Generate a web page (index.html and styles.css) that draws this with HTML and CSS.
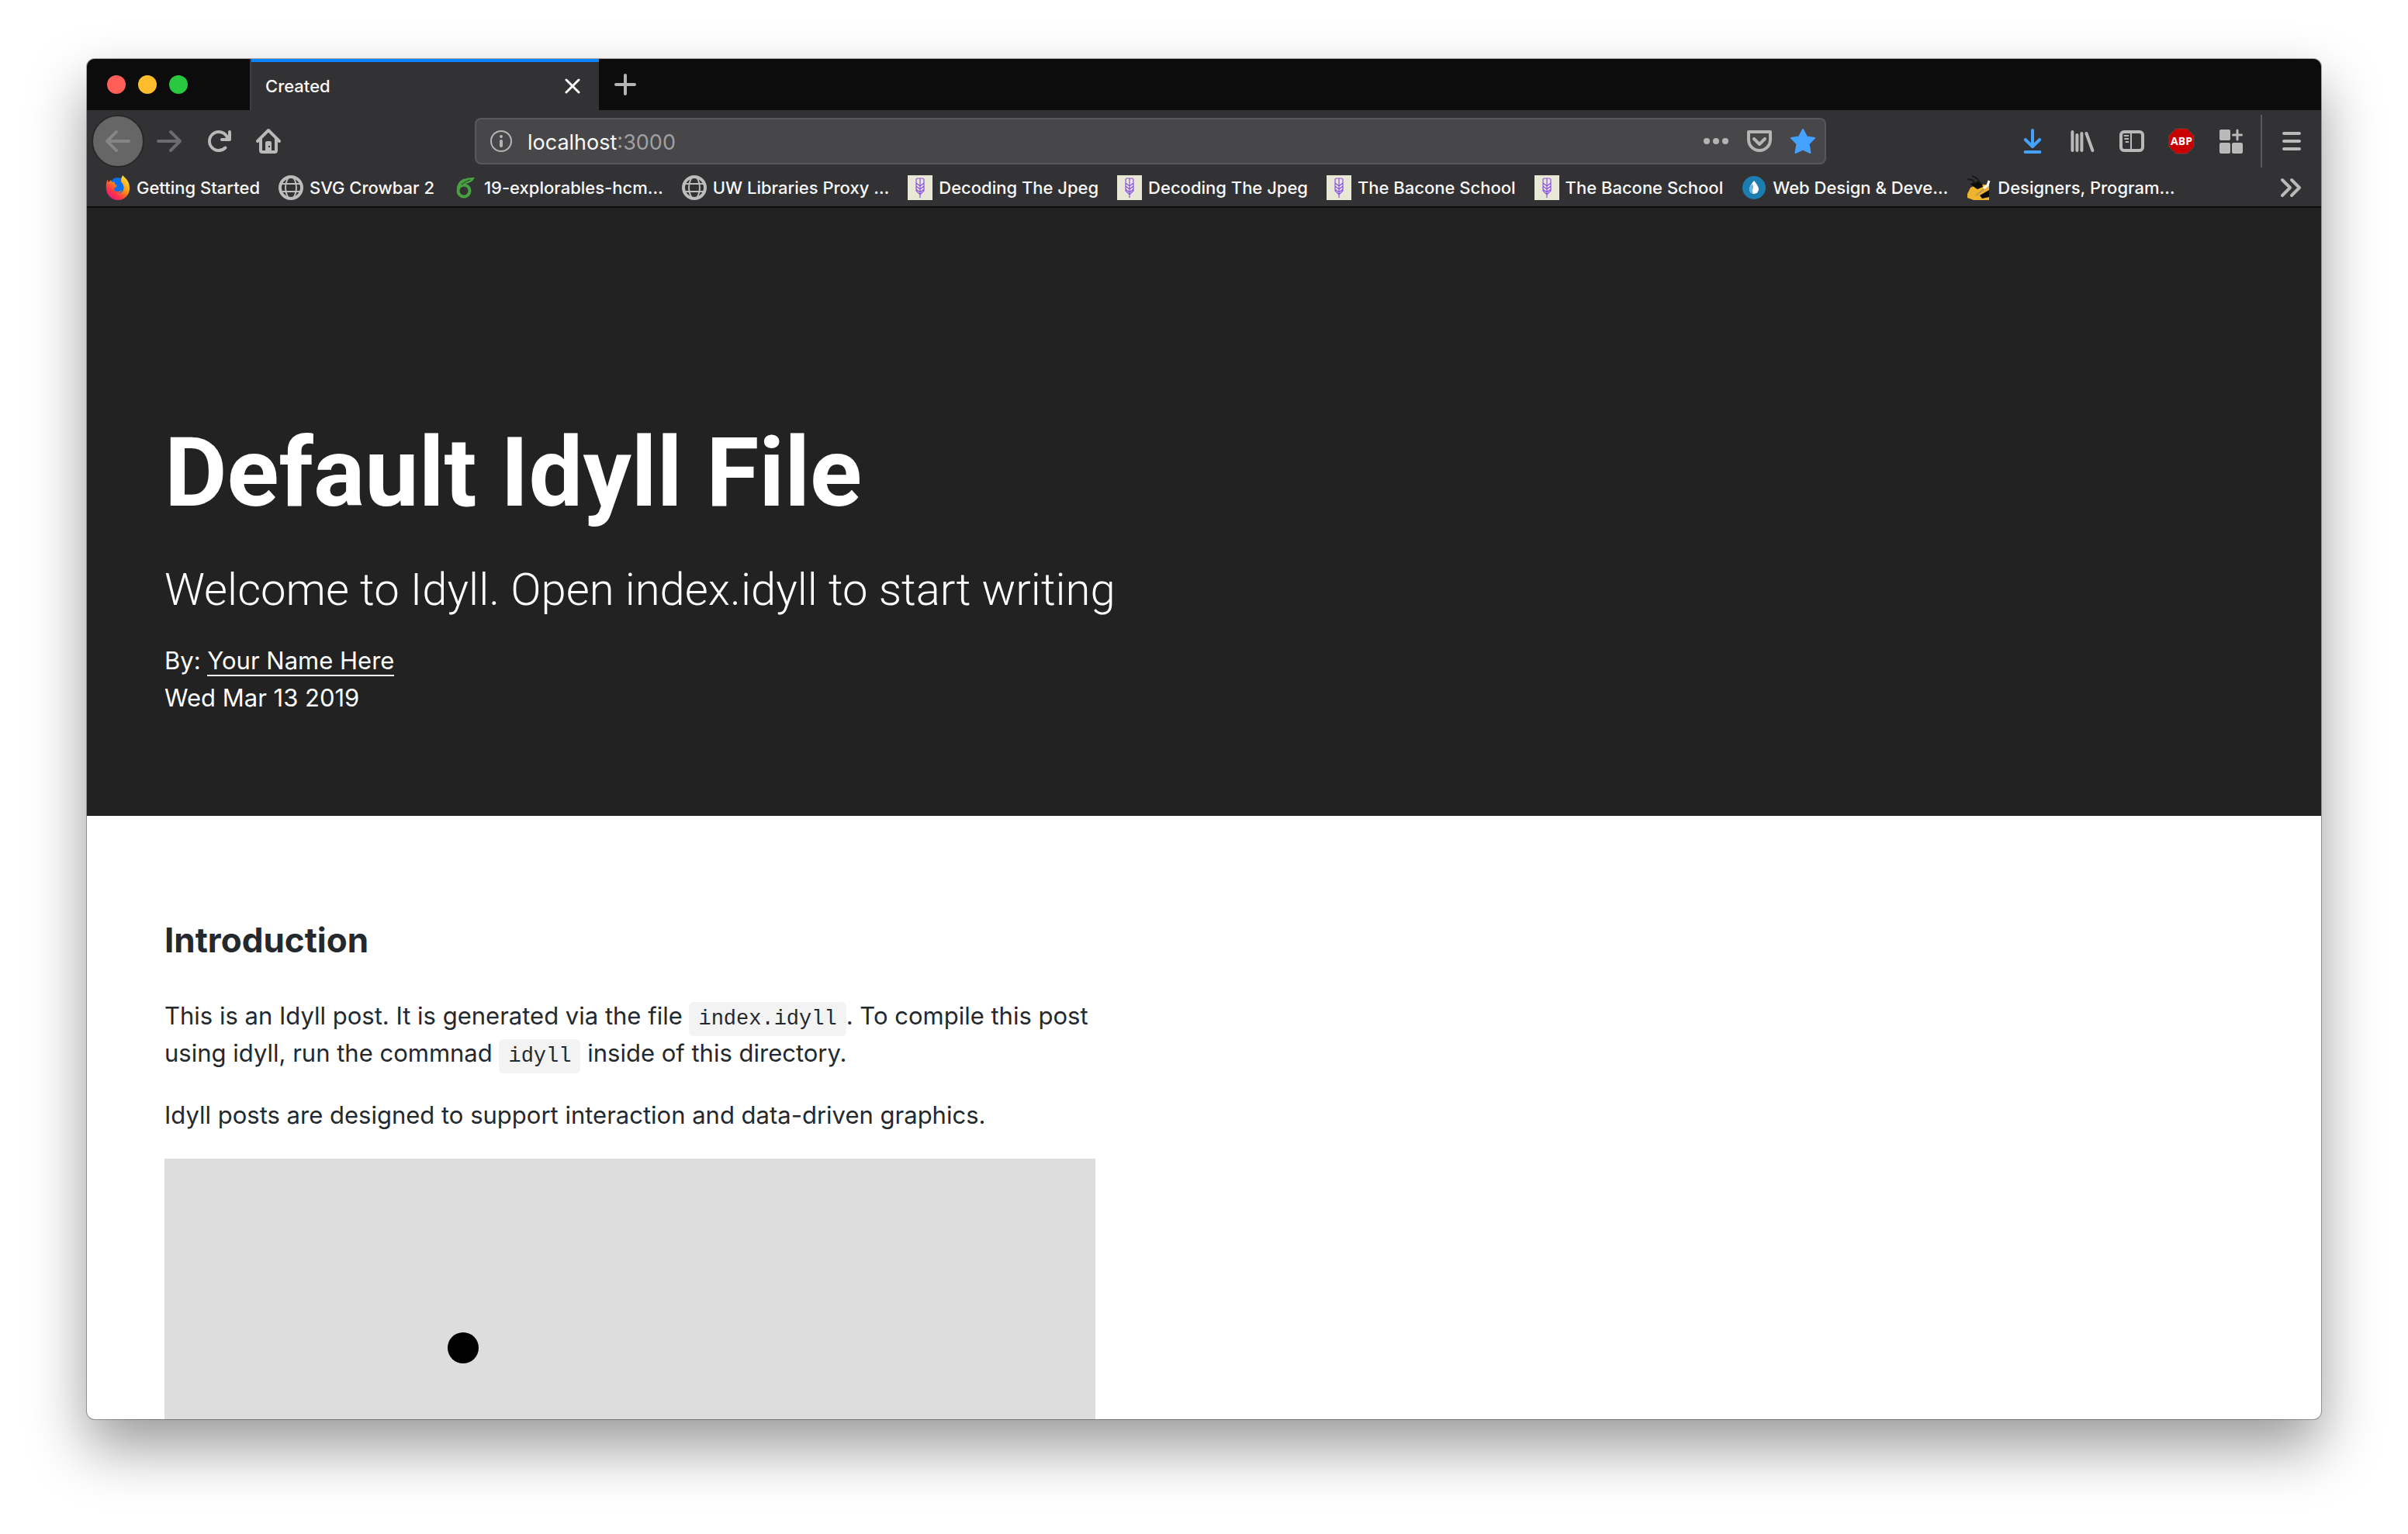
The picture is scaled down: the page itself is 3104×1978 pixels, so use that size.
FILE: index.html
```html
<!DOCTYPE html>
<html lang="en">
<head>
<meta charset="utf-8">
<title>Created</title>
<link rel="stylesheet" href="styles.css">
</head>
<body>
<svg class="defs" aria-hidden="true">
  <symbol id="globe" viewBox="0 0 32 32">
    <g fill="none" stroke="#bdbdbe">
      <circle cx="16" cy="16" r="14" stroke-width="4"/>
      <ellipse cx="16" cy="16" rx="7" ry="14" stroke-width="2"/>
      <path d="M3 11h26M3 21h26" stroke-width="2"/>
    </g>
  </symbol>
  <symbol id="wheat" viewBox="0 0 32 32">
    <path fill="#e9e7d6" d="M0 0h32v32H0z"/>
    <path fill="none" stroke="#8a55e6" stroke-width="1.2" d="M16 4v25M11 6q0-2 2-2h6q2 0 2 2v14l-5 5-5-5zM11 10l5 4 5-4M11 14l5 4 5-4M11 18l5 4 5-4"/>
  </symbol>
</svg>
<div class="window">
  <header class="chrome">
    <div class="tabstrip">
      <div class="lights">
        <button class="light red" aria-label="Close window"></button>
        <button class="light yellow" aria-label="Minimize window"></button>
        <button class="light green" aria-label="Zoom window"></button>
      </div>
      <div class="tab">
        <span>Created</span>
        <button class="tab-close" aria-label="Close tab"><svg viewBox="0 0 20 20"><path d="M2 2l16 16M18 2L2 18" stroke="#f9f9fa" stroke-width="3" stroke-linecap="round"/></svg></button>
      </div>
      <button class="tab-new" aria-label="New tab"><svg viewBox="0 0 28 28"><path d="M14 2v24M2 14h24" stroke="#b4b4b5" stroke-width="4" stroke-linecap="round"/></svg></button>
    </div>
    <nav class="toolbar">
      <button class="tool back" aria-label="Back"><svg viewBox="0 0 16 16"><path d="M15 7H3.414l4.293-4.293a1 1 0 0 0-1.414-1.414l-6 6a1 1 0 0 0 0 1.414l6 6a1 1 0 0 0 1.414-1.414L3.414 9H15a1 1 0 0 0 0-2z"/></svg></button>
      <button class="tool forward" aria-label="Forward"><svg viewBox="0 0 16 16"><path d="M1 7h11.586L8.293 2.707a1 1 0 0 1 1.414-1.414l6 6a1 1 0 0 1 0 1.414l-6 6a1 1 0 0 1-1.414-1.414L12.586 9H1a1 1 0 0 1 0-2z"/></svg></button>
      <button class="tool" aria-label="Reload"><svg viewBox="0 0 16 16"><path d="M15 1a1 1 0 0 0-1 1v2.418A6.995 6.995 0 1 0 8 15a6.954 6.954 0 0 0 4.950-2.050 1 1 0 0 0-1.414-1.414A5.019 5.019 0 1 1 12.549 6H10a1 1 0 0 0 0 2h5a1 1 0 0 0 1-1V2a1 1 0 0 0-1-1z"/></svg></button>
      <button class="tool" aria-label="Home"><svg viewBox="0 0 16 16"><path fill-rule="evenodd" d="M15.707 7.293l-7-7a1 1 0 0 0-1.414 0l-7 7a1 1 0 0 0 1.414 1.414L2 8.414V14a2 2 0 0 0 2 2h8a2 2 0 0 0 2-2V8.414l.293.293a1 1 0 0 0 1.414-1.414zM12 14h-2V9a1 1 0 0 0-1-1H7a1 1 0 0 0-1 1v5H4V6.414l4-4 4 4zM8 11h1v1H8z"/></svg></button>
      <div class="urlbar">
        <svg class="info" viewBox="0 0 32 32"><circle cx="16" cy="16" r="13" fill="none" stroke="#b4b4b5" stroke-width="2"/><circle cx="16" cy="10" r="2"/><path d="M16 16v6" stroke="#b4b4b5" stroke-width="4" stroke-linecap="round"/></svg>
        <label class="address"><input class="host" type="text" value="localhost" aria-label="Address"><span class="port">:3000</span></label>
        <button class="action" aria-label="Page actions"><svg viewBox="0 0 32 32"><circle cx="4" cy="16" r="4"/><circle cx="16" cy="16" r="4"/><circle cx="28" cy="16" r="4"/></svg></button>
        <button class="action" aria-label="Save to Pocket"><svg viewBox="0 0 32 32"><path fill="none" stroke="#b4b4b5" stroke-width="4" stroke-linejoin="round" d="M2 4h28v10a14 14 0 0 1-28 0z"/><path fill="none" stroke="#b4b4b5" stroke-width="4" stroke-linecap="round" stroke-linejoin="round" d="M9 13l7 7 7-7"/></svg></button>
        <button class="action" aria-label="Bookmark this page"><svg viewBox="0 0 32 32"><path fill="#45a1ff" stroke="#45a1ff" stroke-width="2" stroke-linejoin="round" d="M16 1l5 9.500 10 1.500-7.500 7.500 2 11.500-9.500-4.500L6.500 31l2-11.500L1 12l10-1.500z"/></svg></button>
      </div>
      <button class="tool" aria-label="Downloads"><svg viewBox="0 0 16 16"><path fill="none" stroke="#45a1ff" stroke-width="2" stroke-linecap="round" stroke-linejoin="round" d="M8 1v10.500M3.400 7L8 11.600 12.600 7M3.300 15h9.400"/></svg></button>
      <button class="tool" aria-label="Library"><svg viewBox="0 0 16 16"><path fill="none" stroke="#b9b9ba" stroke-width="2" stroke-linecap="round" d="M1.700 2v12M4.700 4v10M7.700 3v11M10.700 3l4 11"/></svg></button>
      <button class="tool" aria-label="Sidebars"><svg viewBox="0 0 16 16"><path fill="none" stroke="#b9b9ba" stroke-width="2" d="M3 2h10a2 2 0 0 1 2 2v8a2 2 0 0 1-2 2H3a2 2 0 0 1-2-2V4a2 2 0 0 1 2-2z"/><path fill="none" stroke="#b9b9ba" d="M7.500 2v12"/><path fill="none" stroke="#b9b9ba" stroke-width=".9" stroke-linecap="round" d="M3.200 4.500h2.500M3.500 6.500h2.200M4.200 8.500h1.500"/></svg></button>
      <button class="tool" aria-label="Adblock Plus"><svg viewBox="0 0 32 32"><path fill="#c80000" stroke="#8f5a5a" stroke-width=".5" d="M9 0h14l9 9v14l-9 9H9l-9-9V9z"/><text class="abp" x="16" y="21" text-anchor="middle">ABP</text></svg></button>
      <button class="tool" aria-label="Extensions"><svg viewBox="0 0 32 32"><rect x="1" y="1" width="14" height="14" rx="2"/><rect x="1" y="18" width="14" height="14" rx="2"/><rect x="17" y="18" width="14" height="14" rx="2"/><path stroke="#b9b9ba" stroke-width="3" stroke-linecap="round" d="M24 2v12M18.500 8h11"/></svg></button>
      <span class="divider"></span>
      <button class="tool" aria-label="Menu"><svg viewBox="0 0 32 32"><path stroke="#b9b9ba" stroke-width="4" stroke-linecap="round" d="M6 6h20M6 16h20M6 26h20"/></svg></button>
    </nav>
    <nav class="bookmarks">
      <a href="#"><svg viewBox="0 0 32 32"><defs><linearGradient id="fire" x1="1" y1="0" x2="0.200" y2="1"><stop offset="0" stop-color="#fff44f"/><stop offset=".45" stop-color="#ff980e"/><stop offset=".75" stop-color="#ff3647"/><stop offset="1" stop-color="#e31587"/></linearGradient></defs><circle cx="16" cy="14" r="11" fill="#0a6fe8"/><path fill="url(#fire)" d="M3 5q0 3 1 4l3-3q0 2 2 3 2 0 3-1-1 3 1 4l2 2-4 3q0 4 5 4 3 0 5-2-1 4-6 4 6 1 8-4t-3-11q0-5 2-8 2 2 5 5 4 5 4 12a15 15 0 0 1-30 0Q0 10 3 5z"/></svg><span>Getting Started</span></a>
      <a href="#"><svg><use href="#globe"/></svg><span>SVG Crowbar 2</span></a>
      <a href="#"><svg viewBox="0 0 32 32"><circle cx="14" cy="20" r="7.500" fill="none" stroke="#47a141" stroke-width="4"/><path fill="none" stroke="#47a141" stroke-width="3.500" d="M6.500 18q0-8 8-12"/><path fill="#47a141" d="M10 10Q12 2 28 3q-4 8-15 8z"/><path stroke="#323234" d="M11 12q5-5 11-6" fill="none"/></svg><span>19-explorables-hcm…</span></a>
      <a href="#"><svg><use href="#globe"/></svg><span>UW Libraries Proxy …</span></a>
      <a href="#"><svg><use href="#wheat"/></svg><span>Decoding The Jpeg</span></a>
      <a href="#"><svg><use href="#wheat"/></svg><span>Decoding The Jpeg</span></a>
      <a href="#"><svg><use href="#wheat"/></svg><span>The Bacone School</span></a>
      <a href="#"><svg><use href="#wheat"/></svg><span>The Bacone School</span></a>
      <a href="#"><svg viewBox="0 0 32 32"><circle cx="16" cy="16" r="15" fill="#1c7db1"/><path fill="#fff" d="M16 7q6 7 6 11a6 6 0 0 1-12 0q0-4 6-11z"/><path fill="#6db5dc" d="M14 11q2 4 0 8 0 3 1 5a6 6 0 0 1-5-6q0-3 4-7z"/></svg><span>Web Design &amp; Deve…</span></a>
      <a href="#"><svg viewBox="0 0 32 32"><path fill="#f0b32d" d="M1 24l4-8 8-4h16v20H9l-8-3z"/><path fill="#0b0b0b" d="M5 11l9-3 6 3 1 4-7 3-6-4zM17 26l12-7v9l-9 2z"/><path fill="none" stroke="#19191a" stroke-width="2" d="M1 5l6 1 5 5M7 1l5 2 6 7"/><path fill="none" stroke="#b59a55" stroke-width="2" d="M12 26l13-10"/><path fill="none" stroke="#fff" stroke-width="3" d="M22 17l5-4 2-6"/></svg><span>Designers, Program…</span></a>
      <button class="overflow" aria-label="More bookmarks"><svg viewBox="0 0 32 32"><path fill="none" stroke="#b9b9ba" stroke-width="4" stroke-linecap="round" stroke-linejoin="round" d="M6 6l10 10L6 26M18 6l10 10-10 10"/></svg></button>
    </nav>
  </header>
  <main class="page">
    <section class="hero">
      <h1>Default Idyll File</h1>
      <p class="subtitle">Welcome to Idyll. Open index.idyll to start writing</p>
      <p class="meta">By: <a href="#">Your Name Here</a></p>
      <p class="meta">Wed Mar 13 2019</p>
    </section>
    <article class="post">
      <h2>Introduction</h2>
      <p>This is an Idyll post. It is generated via the file <code>index.idyll</code>. To compile this post using idyll, run the commnad <code>idyll</code> inside of this directory.</p>
      <p>Idyll posts are designed to support interaction and data-driven graphics.</p>
      <svg class="graphic"><circle cx="385" cy="244" r="20"/></svg>
    </article>
  </main>
</div>
</body>
</html>
```
FILE: styles.css
```css
* { box-sizing: border-box; }

body {
  margin: 0;
  min-height: 100vh;
  padding: 76px 112px 148px;
  display: flex;
  background: #fff;
  font-family: Inter, "Liberation Sans", sans-serif;
}

button {
  padding: 0;
  border: 0;
  background: none;
  display: flex;
  align-items: center;
  justify-content: center;
}

svg { display: block; }
.defs { display: none; }

.window {
  flex: 1;
  min-width: 0;
  display: flex;
  flex-direction: column;
  overflow: hidden;
  border-radius: 10px;
  background: #fff;
  box-shadow: 0 0 0 1px rgba(0, 0, 0, 0.3), 0 36px 76px rgba(0, 0, 0, 0.4);
}

.chrome { background: #323234; color: #f9f9fa; }

.tabstrip {
  display: flex;
  height: 66px;
  background: #0c0c0d;
}

.lights {
  display: flex;
  align-items: center;
  gap: 16px;
  width: 210px;
  padding-left: 26px;
}

.light { width: 24px; height: 24px; border-radius: 50%; }
.red { background: #ff5f57; }
.yellow { background: #ffbd2e; }
.green { background: #28c940; }

.tab {
  display: flex;
  align-items: center;
  justify-content: space-between;
  width: 450px;
  padding: 4px 24px 0 18px;
  border-left: 2px solid #3e3e40;
  background: linear-gradient(#0a84ff 4px, #323234 4px);
  font-size: 22px;
  font-weight: 500;
}

.tab-close svg { width: 20px; height: 20px; }
.tab-new { width: 68px; }
.tab-new svg { width: 28px; height: 28px; }

.toolbar {
  display: flex;
  align-items: center;
  height: 80px;
  padding: 0 6px;
  fill: #b9b9ba;
}

.tool { width: 64px; height: 64px; fill: #b9b9ba; }
.tool svg, .action svg { width: 32px; height: 32px; overflow: visible; }
.back {
  width: 68px;
  height: 68px;
  border: 2px solid #29292b;
  border-radius: 50%;
  background: #666;
  fill: #858585;
}
.forward { fill: #6c6c6e; }

.abp { font: bold 14px "Open Sans", sans-serif; fill: #fff; }

.urlbar {
  flex: 1;
  display: flex;
  align-items: center;
  height: 60px;
  margin: 0 234px;
  padding-left: 16px;
  border: 2px solid #58585a;
  border-radius: 8px;
  background: #474749;
}

.info { width: 32px; height: 32px; fill: #b4b4b5; }
.address {
  flex: 1;
  display: flex;
  align-items: center;
  padding: 2px 0 0 18px;
  font-size: 27px;
}
.host {
  field-sizing: content;
  padding: 0;
  border: 0;
  background: none;
  color: #f9f9fa;
  font: inherit;
}
.port { color: #a0a0a2; }
.action { width: 56px; height: 56px; fill: #b4b4b5; }

.divider { width: 2px; height: 68px; margin: 0 6px; background: #5b5b5d; }

.bookmarks {
  display: flex;
  align-items: center;
  gap: 24px;
  height: 46px;
  padding: 0 24px 4px;
  border-bottom: 2px solid #0c0c0d;
  font-size: 22px;
  font-weight: 500;
}
.bookmarks a {
  display: flex;
  align-items: center;
  gap: 8px;
  color: inherit;
  text-decoration: none;
  white-space: nowrap;
}
.bookmarks svg { width: 32px; height: 32px; }
.overflow { margin-left: auto; }

.page { flex: 1; display: flex; flex-direction: column; }

.hero {
  padding: 262px 100px 128px;
  background: #222;
  color: #fff;
}
.hero h1 {
  margin: 0;
  font: 700 124px/160px Roboto, Inter, sans-serif;
}
.subtitle {
  margin: 32px 0 30px;
  font: 300 58px/76px Roboto, Inter, sans-serif;
}
.meta { margin: 0; font-size: 31px; line-height: 48px; }
.meta a { color: inherit; text-decoration: none; border-bottom: 2px solid #fff; }

.post {
  flex: 1;
  display: flex;
  flex-direction: column;
  max-width: 1400px;
  padding: 128px 100px 0;
  color: #24292e;
}
.post h2 { margin: 0 0 42px; font-size: 44px; line-height: 64px; font-weight: 700; }
.post p { margin: 0 0 32px; font-size: 31px; line-height: 48px; }
.post code {
  padding: 7px 12px;
  border-radius: 6px;
  background: #f3f3f3;
  font: 27px "Liberation Mono", monospace;
}
.graphic { flex: 1; width: 100%; background: #ddd; }
```
